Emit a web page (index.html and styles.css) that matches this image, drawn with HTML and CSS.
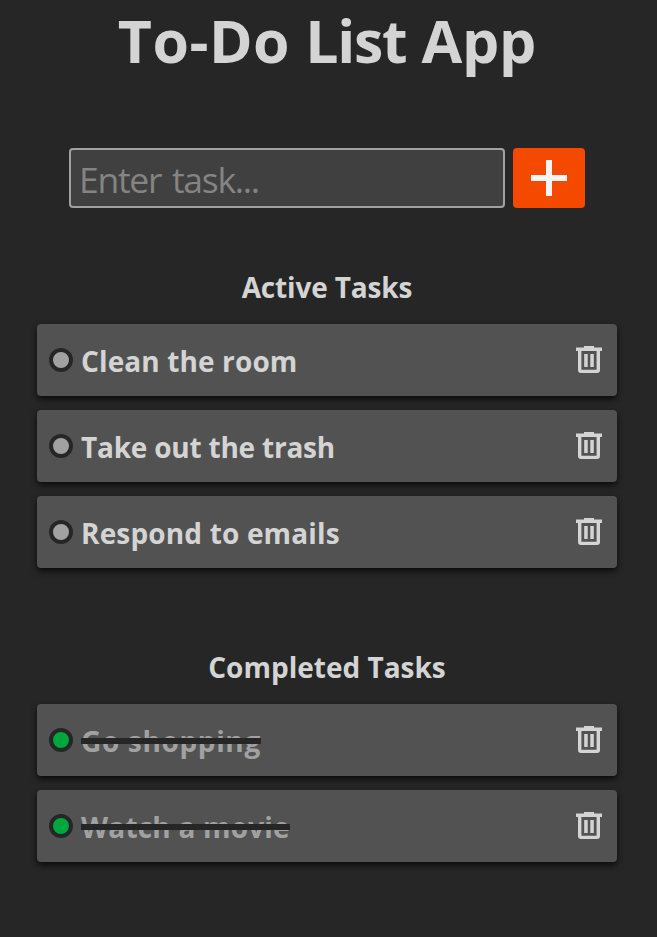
FILE: index.html
```html
<!DOCTYPE html>
<html lang="en">
<head>
<meta charset="utf-8">
<title>To-Do List App</title>
<link rel="stylesheet" href="styles.css">
</head>
<body>
<svg width="0" height="0" class="defs">
  <symbol id="trash" viewBox="0 0 26 28">
    <path d="M8 0H18V1.5H26V5H24V24Q24 27 21 27H5Q2 27 2 24V5H0V1.5H8ZM5.4 5V23.8H20.6V5ZM8.2 8H11.7V21H8.2ZM14.3 8H17.8V21H14.3Z" fill="currentColor" fill-rule="evenodd"/>
  </symbol>
</svg>
<main class="app">
  <h1 class="title"><span class="todo">To-Do</span> <span class="word">List</span> App</h1>
  <form class="entry">
    <input class="field" type="text" placeholder="Enter task..." aria-label="Task">
    <button class="add" type="button" aria-label="Add"><svg viewBox="0 0 36 36"><path d="M18 0V36M0 18H36" stroke="#f5f5f5" stroke-width="6"/></svg></button>
  </form>
  <section class="group">
    <h2 class="heading active">Active Tasks</h2>
    <ul class="list">
      <li class="task"><i class="dot"></i><span class="label clean">Clean the room</span><svg class="trash"><use href="#trash"/></svg></li>
      <li class="task"><i class="dot"></i><span class="label take">Take out the trash</span><svg class="trash"><use href="#trash"/></svg></li>
      <li class="task"><i class="dot"></i><span class="label respond">Respond to emails</span><svg class="trash"><use href="#trash"/></svg></li>
    </ul>
  </section>
  <section class="group">
    <h2 class="heading">Completed Tasks</h2>
    <ul class="list">
      <li class="task done"><i class="dot"></i><span class="label shop">Go shopping</span><svg class="trash"><use href="#trash"/></svg></li>
      <li class="task done"><i class="dot"></i><span class="label watch">Watch a movie</span><svg class="trash"><use href="#trash"/></svg></li>
    </ul>
  </section>
</main>
</body>
</html>
```
FILE: styles.css
```css
* { box-sizing: border-box; margin: 0; padding: 0; }
body { background: #262626; color: #d4d4d4; font-family: "Segoe UI", "Open Sans", "Noto Sans", sans-serif; }
.defs { display: block; }
.app { width: 580px; margin-left: 37px; }
.title { height: 84px; line-height: 81px; font-size: 59px; letter-spacing: -.2px; text-align: center; white-space: nowrap; }
.todo { letter-spacing: .5px; }
.word { letter-spacing: -1.3px; }
.entry { display: flex; gap: 8px; margin: 64px 0 0 32px; }
.field { width: 436px; height: 60px; padding: 2px 8px 0 8px; border: 2px solid #a1a1a1; border-radius: 4px; background: #404040; font: 35.5px "Segoe UI", "Open Sans", "Noto Sans", sans-serif; letter-spacing: -1.3px; word-spacing: 3px; }
.field::placeholder { color: #848484; }
.add { width: 72px; height: 60px; border: 0; border-radius: 4px; background: #f54900; display: grid; place-items: center; }
.add svg { width: 36px; height: 36px; }
.group { padding-top: 60px; }
.heading { height: 40px; line-height: 38px; margin-bottom: 16px; font-size: 28px; text-align: center; }
.active { letter-spacing: -.15px; }
.list { list-style: none; display: flex; flex-direction: column; gap: 14px; padding-bottom: 20px; }
.task { display: flex; align-items: center; height: 72px; padding: 0 15px 0 12px; border-radius: 4px; background: #525252; box-shadow: 0 3px 6px rgba(0,0,0,.75); }
.dot { width: 24px; height: 24px; border: 4px solid #262626; border-radius: 50%; background: #a1a1a1; margin-right: 8px; }
.label { font-size: 28px; font-weight: 700; line-height: 40px; white-space: nowrap; position: relative; top: 1px; }
.clean { letter-spacing: .12px; }
.take { letter-spacing: -.22px; }
.respond { letter-spacing: .16px; }
.shop { letter-spacing: .65px; }
.watch { letter-spacing: .2px; }
.trash { width: 26px; height: 28px; margin-left: auto; color: #d4d4d4; }
.done .dot { background: #00a63e; }
.done .label { color: #a1a1a1; }
.done .label::after { content: ""; position: absolute; left: 0; right: 0; top: 17px; height: 6px; background: #262626; }
```
